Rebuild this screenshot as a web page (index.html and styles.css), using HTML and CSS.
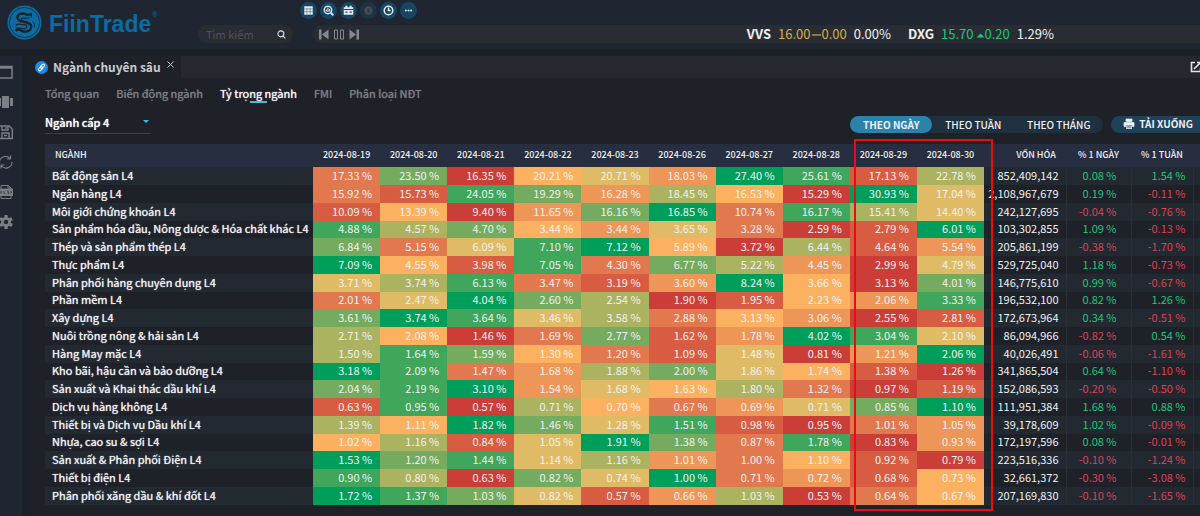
FILE: index.html
```html
<!DOCTYPE html>
<html lang="vi">
<head>
<meta charset="utf-8">
<title>FiinTrade - Ngành chuyên sâu</title>
<link rel="stylesheet" href="styles.css">
</head>
<body>
<header class="topbar">
  <a class="brand" href="#">
    <svg class="brand-mark" viewBox="0 0 36 36" aria-hidden="true">
      <circle cx="18" cy="18" r="17.500" fill="#0a6ca3"/>
      <circle cx="18" cy="18" r="15.500" fill="none" stroke="#1c222c" stroke-width=".8"/>
      <g fill="none" stroke="#1c222c">
        <path d="M25 9c-2 2-4 1-7 0-4-1-8 1-7 5 1 3 5 3 9 4 5 1 6 4 4 7-2 3-7 3-10 1-2-1-4-1-5 1" stroke-width="2.400"/>
        <path d="M23 13c-3 2-6-1-8 1-1 2 2 3 5 3M9 21c3-3 6 0 9-1 3 0 3 3 1 4-3 1-6-1-10 0" stroke-width="1.200"/>
        <path d="M25 8v5M26 17c2 1 3 4 2 6" stroke-width="1"/>
      </g>
    </svg>
    <span class="brand-name">FiinTrade</span><span class="brand-reg">®</span>
  </a>
  <div class="topbar-main">
    <nav class="shortcuts" aria-label="Lối tắt">
      <button class="round" aria-label="Bảng"><svg viewBox="0 0 16 16"><path d="M4 4h8v8H4z" fill="#e5ecf2"/><path d="M4 6.500h8M4 9h8M6.500 5.500v6.500M9.500 5.500v6.500" stroke="#3d6681" stroke-width=".5"/></svg></button>
      <button class="round" aria-label="Tra cứu"><svg viewBox="0 0 16 16" fill="none" stroke="#dce6ee"><circle cx="7.500" cy="7.500" r="3.500" stroke-width="1.300"/><path d="M10 10l2.500 2.500" stroke-width="1.800"/><path d="M6 9V7M7.500 9.500V5.500M9 9V6.500" stroke-width="1"/></svg></button>
      <button class="round" aria-label="Lịch"><svg viewBox="0 0 16 16"><path d="M3.500 5h9v7h-9zM5 3.500h2v2H5zM9 3.500h2v2H9z" fill="#e5ecf2"/><path d="M3.500 7h9M5 9.500h2M9 9.500h2" stroke="#174665" stroke-width="1"/></svg></button>
      <button class="round muted" aria-label="Thông báo"><svg viewBox="0 0 16 16"><circle cx="8" cy="8" r="4" fill="#454a54"/><path d="M8 6v4" stroke="#273849" stroke-width="1.500"/></svg></button>
      <button class="round" aria-label="Lịch sử"><svg viewBox="0 0 16 16" fill="none" stroke="#e5ecf2" stroke-width="1.400"><circle cx="8" cy="8" r="4"/><path d="M8 5.500V8h2"/></svg></button>
      <button class="round" aria-label="Thêm"><svg viewBox="0 0 16 16" fill="#e5ecf2"><circle cx="5.500" cy="8" r=".9"/><circle cx="8" cy="8" r=".9"/><circle cx="10.500" cy="8" r=".9"/></svg></button>
    </nav>
    <div class="strip">
      <label class="search">
        <input type="text" placeholder="Tìm kiếm" aria-label="Tìm kiếm">
        <svg viewBox="0 0 10 10" fill="none" stroke="#dfe2e6" stroke-width="1.200" aria-hidden="true"><circle cx="4.300" cy="4.300" r="3.300"/><path d="M6.700 6.700L9.300 9.300"/></svg>
      </label>
      <div class="ticker">
        <div class="player">
          <button aria-label="Trước"><svg viewBox="0 0 10 10" fill="#85888e"><path d="M0 0h2.500v10H0zM9.500 0v10L3 5z"/></svg></button>
          <button aria-label="Tạm dừng"><svg viewBox="0 0 10 10" fill="none" stroke="#85888e"><path d="M.5.500h3v9h-3zM6.500.500h3v9h-3z"/></svg></button>
          <button aria-label="Sau"><svg viewBox="0 0 10 10" fill="#85888e"><path d="M7.500 0H10v10H7.500zM.5 0v10L7 5z"/></svg></button>
        </div>
        <div class="quotes">
          <div class="quote"><b>VVS</b><span class="flat">16.00<svg class="mark" viewBox="0 0 9 8"><path d="M0 4h9" stroke="#dcab42" stroke-width="1.200"/></svg>0.00</span><span>0.00%</span></div>
          <div class="quote"><b>DXG</b><span class="rise">15.70<svg class="mark" viewBox="0 0 9 8"><path d="M.5 6.500l4-4 4 4z" fill="#1fc67c"/></svg>0.20</span><span>1.29%</span></div>
        </div>
      </div>
    </div>
  </div>
</header>

<div class="body">
  <nav class="side" aria-label="Công cụ">
    <button aria-label="Cửa sổ"><svg viewBox="0 0 16 16" fill="none" stroke="#7b7f87"><path d="M2 2.500h13v11.500H2z" stroke-width="1.500"/><path d="M2 3.500h13" stroke-width="2.500"/></svg></button>
    <button aria-label="Bố cục"><svg viewBox="0 0 16 16" fill="#7b7f87"><path d="M5 2h7v12H5zM1 4h3v8H1zM13 4h3v8h-3z"/></svg></button>
    <button aria-label="Lưu"><svg viewBox="0 0 16 16" fill="none" stroke="#7b7f87" stroke-width="1.400"><path d="M2 2h10l3.300 3v9.500H2zM5 2v4h6V2M5 14.500V9h7v5.500M7 11.500h3M9 3v2"/></svg></button>
    <button aria-label="Làm mới"><svg viewBox="0 0 16 16" fill="none" stroke="#7b7f87" stroke-width="1.100"><path d="M2.500 8A6 6 0 0 1 13 4.500M13.500 1.500V5H10M15 8A6 6 0 0 1 4.500 12M4 14.500V11h3.500"/></svg></button>
    <button aria-label="Xuất XLSX"><svg viewBox="0 0 16 16" fill="none" stroke="#7b7f87"><path d="M4 5V1.500h7.500L14 4v1M4 12v2.500h10V12M11 1.500V4h3"/><path d="M1 5h15v6.500H1z" fill="#7b7f87"/><path d="M3 7l2 2.500M5 7L3 9.500M7 7v2.500h1.500M12 7h-1.500v1.200H12v1.300h-1.500M13.200 7l2 2.500M15.200 7l-2 2.500" stroke="#202631" stroke-width=".5"/></svg></button>
    <button aria-label="Cài đặt"><svg viewBox="0 0 16 16"><g stroke="#7b7f87" stroke-width="3.200"><path d="M9 1v14M3 4.500l12 7M3 11.500l12-7"/></g><circle cx="9" cy="8" r="5" fill="#7b7f87"/><circle cx="9" cy="8" r="2.200" fill="#202631"/></svg></button>
  </nav>

  <main class="panel">
    <div class="tabbar">
      <div class="tab">
        <svg class="link-icon" viewBox="0 0 14 14" aria-hidden="true"><circle cx="7" cy="7" r="7" fill="#1d8be8"/><g fill="none" stroke="#fff" stroke-width="1.100"><rect x="5.500" y="4.300" width="5.200" height="2.800" rx="1.400" transform="rotate(-45 8.100 5.700)"/><rect x="3.300" y="6.900" width="5.200" height="2.800" rx="1.400" transform="rotate(-45 5.900 8.300)"/></g></svg>
        <span class="tab-name">Ngành chuyên sâu</span>
        <button class="close" aria-label="Đóng"><svg viewBox="0 0 7 7" stroke="#c9cbcf" fill="none"><path d="M.5.500l6 6M6.500.500l-6 6"/></svg></button>
      </div>
      <div class="tab-rest"><button class="popout" aria-label="Mở cửa sổ"><svg viewBox="0 0 12 12" fill="none" stroke="#e3e5e8" stroke-width="1.600"><path d="M5 1.500H1.500v9h9V7M4 8l6.500-6.500M7 1.500h4V5"/></svg></button></div>
    </div>
    <nav class="subtabs">
      <a href="#">Tổng quan</a>
      <a href="#">Biến động ngành</a>
      <a href="#" class="current" aria-current="page">Tỷ trọng ngành</a>
      <a href="#">FMI</a>
      <a href="#">Phân loại NĐT</a>
    </nav>
    <div class="toolbar">
      <div class="level">
        <select aria-label="Cấp ngành"><option>Ngành cấp 4</option></select>
        <svg viewBox="0 0 6 4" aria-hidden="true"><path d="M0 0h6L3 3z" fill="#45b8e6"/></svg>
      </div>
      <div class="periods">
        <button class="on">THEO NGÀY</button><button>THEO TUẦN</button><button>THEO THÁNG</button>
      </div>
      <button class="download"><svg viewBox="0 0 12 12" aria-hidden="true"><path d="M3 1h6v2.500H3zM1 4.500h10v4H9.500V7h-7v1.500H1z" fill="#eef2f5" stroke="#eef2f5" stroke-width=".7"/><path d="M3 7.500h6V11H3z" fill="#c8d3dc"/><path d="M4 9h4" stroke="#1f4259" stroke-width=".7"/></svg>TẢI XUỐNG</button>
    </div>
    <div class="table-wrap">
      <table class="weights">
        <colgroup><col class="c-name"><col class="c-day" span="10"><col class="c-cap"><col class="c-d"><col class="c-w"><col class="c-end"></colgroup>
        <thead><tr id="head"></tr></thead>
        <tbody id="rows"></tbody>
      </table>
      <div class="highlight"></div>
    </div>
  </main>
</div>
<script src="table.js"></script>
</body>
</html>
```
FILE: styles.css
```css
* { box-sizing: border-box; }
body {
  margin: 0;
  min-height: 100vh;
  display: flex;
  flex-direction: column;
  background: #1a1f28;
  color: #f0f1f3;
  font: 12px/16px "Noto Sans CJK SC", "Noto Sans", sans-serif;
  overflow: hidden;
}
button { margin: 0; padding: 0; border: 0; background: none; color: inherit; font: inherit; }
svg { display: block; }
a { color: inherit; text-decoration: none; }

.topbar { display: flex; height: 49px; background: #1f2631; }
.brand { display: flex; width: 198px; padding: 5px 0 0 7px; color: #0a6ca3; }
.brand-mark { width: 35px; height: 35px; }
.brand-name { margin: 6px 0 0 7px; font: bold 23px/26px "Liberation Sans", Arial, sans-serif; }
.brand-reg { margin: 4px 0 0 1px; font: 7px/12px "Liberation Sans", Arial, sans-serif; }
.topbar-main { flex: 1; min-width: 0; }
.shortcuts { display: flex; gap: 4px; padding: 2px 0 0 102px; height: 25px; }
.round { width: 17px; height: 17px; border-radius: 50%; background: #174665; }
.round + .round { margin-left: -1px; }
.round.muted { background: #1e3445; }
.round svg { width: 17px; height: 17px; }
.strip { display: flex; gap: 20px; }
.search { display: flex; align-items: center; width: 95px; height: 18px; padding: 0 7px 0 8px; border-radius: 9px; background: #2a2c33; }
.search input { flex: 1; min-width: 0; padding: 0; border: 0; background: none; color: #ddd; font: inherit; font-size: 11px; }
.search input::placeholder { color: #50535a; opacity: 1; }
.search svg { width: 9px; height: 9px; }
.ticker { flex: 1; display: flex; align-items: center; height: 18px; border-radius: 9px 0 0 9px; background: #2a2c33; }
.player { display: flex; gap: 5px; padding-left: 6px; }
.player svg { width: 10px; height: 11px; }
.quotes { display: flex; gap: 17px; margin: 0 146px 0 auto; font-size: 13px; line-height: 18px; }
.quote { display: flex; gap: 7px; }
.mark { display: inline-block; width: 9px; height: 8px; margin-left: 2px; }
.flat { color: #dcab42; }
.rise { color: #1fc67c; }

.body { flex: 1; display: flex; gap: 6px; margin-top: 7px; }
.side { display: flex; flex-direction: column; gap: 14px; width: 22px; padding-top: 8px; background: #1f2631; }
.side svg { width: 16px; height: 16px; margin-left: -3px; }
.side button { height: 16px; }
.panel { flex: 1; min-width: 0; background: #1f2128; }
.tabbar { display: flex; height: 22px; }
.tab { display: flex; align-items: center; width: 153px; padding-left: 7px; }
.link-icon { width: 13px; height: 13px; margin-right: 5px; }
.tab-name { font-size: 12px; font-weight: bold; line-height: 22px; color: #c9cbcf; white-space: nowrap; }
.close { margin: 0 0 5px 6px; }
.close svg { width: 7px; height: 7px; }
.tab-rest { flex: 1; display: flex; justify-content: flex-end; align-items: center; background: #262830; }
.popout { width: 10px; overflow: hidden; }
.popout svg { width: 12px; height: 12px; }

.subtabs { display: flex; gap: 17px; padding: 7px 0 0 17px; font-size: 11px; color: #7b7e85; text-shadow: 0 0 1px currentColor; }
.subtabs a { white-space: nowrap; }
.subtabs .current { color: #f7f8f9; text-shadow: 0 0 1px currentColor; }
.current::after { content: ""; display: block; width: 17px; height: 2px; margin: 0 auto; background: #45b8e6; }
.toolbar { display: flex; align-items: center; height: 20px; margin: 11px 0 10px 17px; }
.level { display: flex; align-items: center; width: 106px; height: 20px; margin-right: auto; padding-bottom: 4px; border-bottom: 1px solid #2b4358; }
.level select { appearance: none; flex: 1; height: 16px; padding: 0; border: 0; background: none; color: #f7f8f9; font: 500 11px/16px "Noto Sans CJK SC", "Noto Sans", sans-serif; text-shadow: 0 0 1px currentColor; }
.level svg { width: 6px; height: 4px; margin-right: 2px; }
.periods { display: flex; border-radius: 9px; background: #1f303e; }
.periods button { width: 82px; height: 17px; border-radius: 9px; font-size: 10px; line-height: 17px; white-space: nowrap; font-weight: 500; }
.periods button + button + button { width: 89px; }
.periods .on { background: #2b83ab; font-weight: bold; }
.download { display: flex; align-items: center; gap: 4px; height: 17px; margin-left: 8px; padding: 0 7px 0 12px; border-radius: 9px 0 0 9px; background: #1f4259; font-size: 10px; font-weight: bold; white-space: nowrap; }
.download svg { width: 12px; height: 12px; }

.table-wrap { position: relative; margin-left: 17px; }
.weights { width: 100%; table-layout: fixed; border-collapse: collapse; font-size: 11px; line-height: 15px; }
.c-day { width: 5.81%; }
.c-cap { width: 82px; }
.c-d { width: 65px; }
.c-w { width: 62px; }
.c-end { width: 7px; }
.weights th { height: 23px; padding: 0 0 2px; background: #262e40; font-size: 9px; font-weight: 500; text-align: center; }
.weights th:first-child { padding-left: 10px; text-align: left; }
.weights th.cap { padding-left: 22px; }
.weights td { height: 18px; padding: 0 8px 2px 0; text-align: right; white-space: nowrap; }
.weights tr:nth-child(4n) td { height: 17px; }
.weights tbody tr:nth-child(odd) { background: #222930; }
.weights td.name { padding: 0 0 2px 7px; text-align: left; text-shadow: 0 0 1px currentColor; }
.weights td.cap { padding-right: 7px; }
.weights td.d { padding-right: 14px; border-left: 1px solid #2a2e35; }
.weights td.w { padding-right: 7px; border-left: 1px solid #2a2e35; }
.weights td.end { padding: 0; border-left: 1px solid #2a2e35; }
.weights .up { color: #1fc67c; }
.weights .down { color: #dc4257; }
.h0 { background: #cb3d37; }
.h1 { background: #d85c42; }
.h2 { background: #e2784e; }
.h3 { background: #ee9657; }
.h4 { background: #fbb160; }
.h5 { background: #e0bb66; }
.h6 { background: #abb360; }
.h7 { background: #74ab5f; }
.h8 { background: #3fa65c; }
.h9 { background: #009e5b; }
.highlight { position: absolute; top: -5px; right: 207px; bottom: -6px; width: 139px; border: 2px solid #e80d10; pointer-events: none; }
```
FILE: table.js
```javascript
const days = ["19", "20", "21", "22", "23", "26", "27", "28", "29", "30"];

// name | weight per day | heat level per day | market cap | 1-day % | 1-week %
const data = `Bất động sản L4|17.33 23.50 16.35 20.21 20.71 18.03 27.40 25.61 17.13 22.78|2704539816|852,409,142|0.08|1.54
Ngân hàng L4|15.92 15.73 24.05 19.29 16.28 18.45 16.53 15.29 30.93 17.04|2187364095|2,108,967,679|0.19|-0.11
Môi giới chứng khoán L4|10.09 13.39 9.40 11.65 16.16 16.85 10.74 16.17 15.41 14.40|1403792865|242,127,695|-0.04|-0.76
Sản phẩm hóa dầu, Nông dược & Hóa chất khác L4|4.88 4.57 4.70 3.44 3.44 3.65 3.28 2.59 2.79 6.01|8674352019|103,302,855|1.09|-0.13
Thép và sản phẩm thép L4|6.84 5.15 6.09 7.10 7.12 5.89 3.72 6.44 4.64 5.54|7258940613|205,861,199|-0.38|-1.70
Thực phẩm L4|7.09 4.55 3.98 7.05 4.30 6.77 5.22 4.45 2.99 4.79|9418276305|529,725,040|1.18|-0.73
Phân phối hàng chuyên dụng L4|3.71 3.74 6.13 3.47 3.19 3.60 8.24 3.66 3.13 4.01|5682139407|146,775,610|0.99|-0.67
Phần mềm L4|2.01 2.47 4.04 2.60 2.54 1.90 1.95 2.23 2.06 3.33|2597601438|196,532,100|0.82|1.26
Xây dựng L4|3.61 3.74 3.64 3.46 3.58 2.88 3.13 3.06 2.55 2.81|7985624301|172,673,964|0.34|-0.51
Nuôi trồng nông & hải sản L4|2.71 2.08 1.46 1.69 2.77 1.62 1.78 4.02 3.04 2.10|6402713985|86,094,966|-0.82|0.54
Hàng May mặc L4|1.50 1.64 1.59 1.30 1.20 1.09 1.48 0.81 1.21 2.06|6874215039|40,026,491|-0.06|-1.61
Kho bãi, hậu cần và bảo dưỡng L4|3.18 2.09 1.47 1.68 1.88 2.00 1.86 1.74 1.38 1.26|9823675410|341,865,504|0.64|-1.10
Sản xuất và Khai thác dầu khí L4|2.04 2.19 3.10 1.54 1.68 1.63 1.80 1.32 0.97 1.19|7893546201|152,086,593|-0.20|-0.50
Dịch vụ hàng không L4|0.63 0.95 0.57 0.71 0.70 0.67 0.69 0.71 0.85 1.10|1806423579|111,951,384|1.68|0.88
Thiết bị và Dịch vụ Dầu khí L4|1.39 1.11 1.82 1.46 1.28 1.51 0.98 0.95 1.01 1.05|6497581023|39,178,609|1.02|-0.09
Nhựa, cao su & sợi L4|1.02 1.16 0.84 1.05 1.91 1.38 0.87 1.78 0.83 0.93|4615972803|172,197,596|0.08|-0.01
Sản xuất & Phân phối Điện L4|1.53 1.20 1.44 1.14 1.16 1.01 1.00 1.10 0.92 0.79|9785632410|223,516,336|-0.10|-1.24
Thiết bị điện L4|0.90 0.80 0.63 0.82 0.74 1.00 0.71 0.72 0.68 0.73|8607592314|32,661,372|-0.30|-3.08
Phân phối xăng dầu & khí đốt L4|1.72 1.37 1.03 0.82 0.57 0.66 1.03 0.53 0.64 0.67|9875136024|207,169,830|-0.10|-1.65`;

function addCell(row, tag, text, className) {
  const cell = document.createElement(tag);
  cell.textContent = text;
  if (className) cell.className = className;
  row.appendChild(cell);
}

const head = document.getElementById("head");
addCell(head, "th", "NGÀNH");
days.forEach(day => addCell(head, "th", "2024-08-" + day));
addCell(head, "th", "VỐN HÓA", "cap");
addCell(head, "th", "% 1 NGÀY");
addCell(head, "th", "% 1 TUẦN");
addCell(head, "th", "");

const body = document.getElementById("rows");
data.split("\n").forEach(line => {
  const [name, weights, heat, cap, day, week] = line.split("|");
  const row = document.createElement("tr");
  const trend = value => (value < 0 ? " down" : " up");
  addCell(row, "td", name, "name");
  weights.split(" ").forEach((w, i) => addCell(row, "td", w + " %", "h" + heat[i]));
  addCell(row, "td", cap, "cap");
  addCell(row, "td", day + " %", "d" + trend(day));
  addCell(row, "td", week + " %", "w" + trend(week));
  addCell(row, "td", "", "end");
  body.appendChild(row);
});
```
